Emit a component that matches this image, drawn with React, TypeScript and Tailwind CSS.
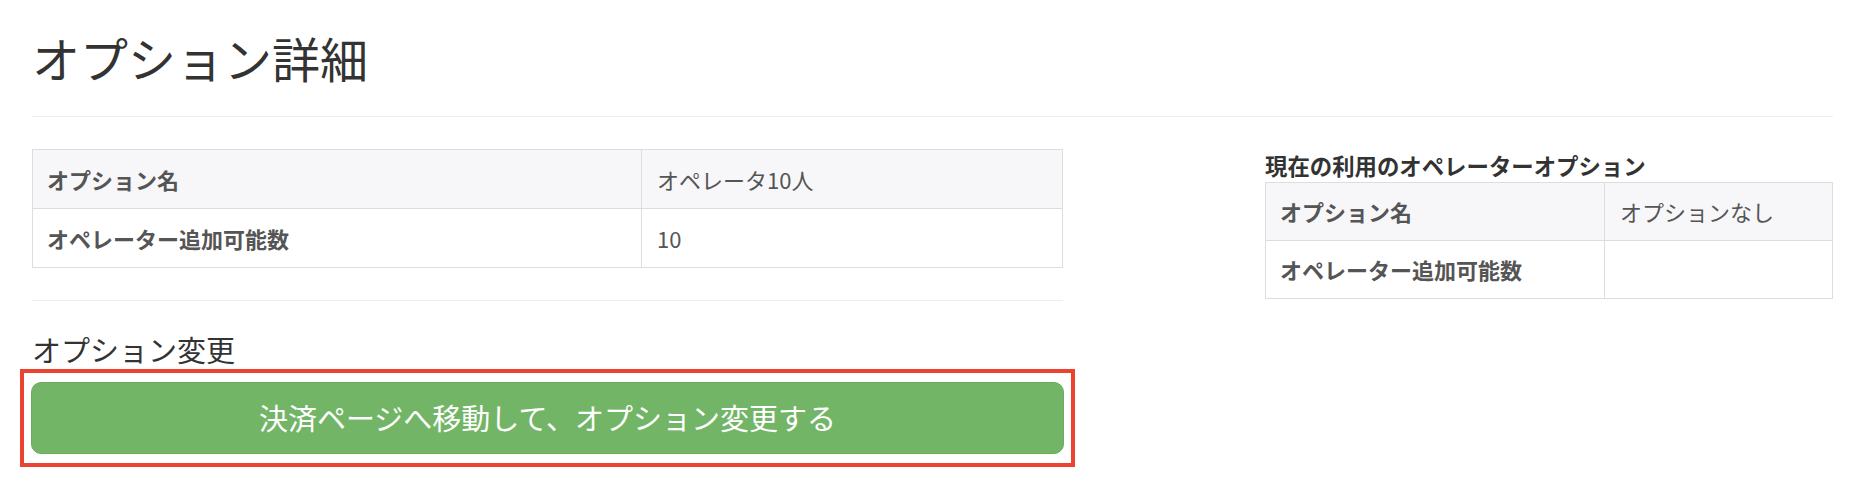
import React from "react";

const font = { fontFamily: '"Noto Sans CJK JP", "Noto Sans", sans-serif' };

const cell = "border border-[#dddddd] px-[15px] py-[14px] text-[22px] text-[#555555] align-middle";

function DetailTable({
  rows,
  labelWidth,
  lineHeight,
}: {
  rows: [string, string][];
  labelWidth: string;
  lineHeight: string;
}) {
  return (
    <table className="w-full border-collapse">
      <tbody>
        {rows.map(([label, value], i) => (
          <tr key={label} className={i === 0 ? "bg-[#f7f7f9]" : "bg-white"}>
            <th className={`${cell} ${labelWidth} ${lineHeight} pl-[14px] text-left font-bold`}>{label}</th>
            <td className={`${cell} ${lineHeight} font-normal`}>{value}</td>
          </tr>
        ))}
      </tbody>
    </table>
  );
}

export default function App() {
  return (
    <div className="min-h-[494px] bg-white pl-[32px] pr-[25px] text-[#333333]" style={font}>
      <h1 className="pt-[31px] text-[48px] font-normal leading-[52px]">オプション詳細</h1>
      <hr className="mt-[33px] border-t border-[#eeeeee]" />

      <div className="flex items-start justify-between">
        <div className="w-[1031px]">
          <div className="mt-[32px]">
            <DetailTable
              labelWidth="w-[609px]"
              lineHeight="leading-[30px]"
              rows={[
                ["オプション名", "オペレータ10人"],
                ["オペレーター追加可能数", "10"],
              ]}
            />
          </div>
          <hr className="mt-[32px] border-t border-[#eeeeee]" />
          <h3 className="mt-[31px] text-[29px] font-normal leading-[34px]">オプション変更</h3>
          <div className="-ml-[12px] -mr-[12px] mt-[3px] border-4 border-[#ec4330] px-[7px] py-[9px]">
            <button className="flex h-[72px] w-full items-center justify-center rounded-[10px] border border-[#6aad5d] bg-[#73b567] text-[29px] text-white">
              決済ページへ移動して、オプション変更する
            </button>
          </div>
        </div>

        <div className="w-[568px]">
          <h4 className="mt-[35px] mb-[4px] text-[22.4px] font-bold leading-[26px] text-[#333333]">
            現在の利用のオペレーターオプション
          </h4>
          <DetailTable
            labelWidth="w-[339px]"
            lineHeight="leading-[29px]"
            rows={[
              ["オプション名", "オプションなし"],
              ["オペレーター追加可能数", ""],
            ]}
          />
        </div>
      </div>
    </div>
  );
}
